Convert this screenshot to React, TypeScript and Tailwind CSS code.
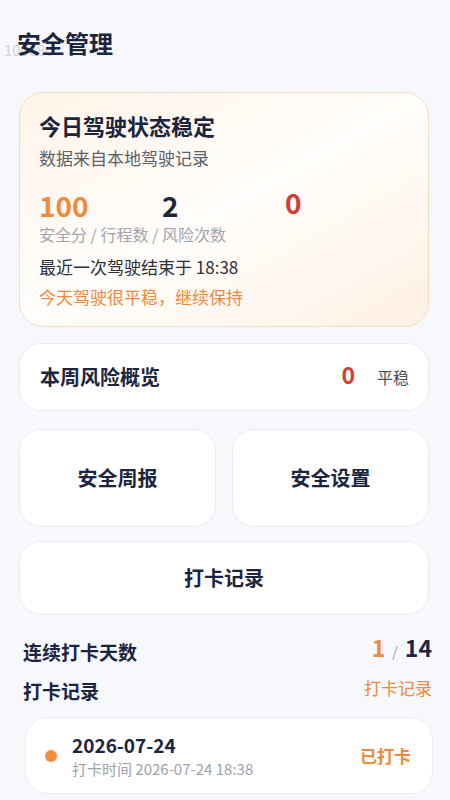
import React from 'react'

const font = { fontFamily: '"Noto Sans CJK SC", "Noto Sans", sans-serif' }

function StatCard() {
  return (
    <div className="rounded-[24px] border border-[#f8dcc2] bg-gradient-to-br from-[#fff4e8] via-[#fffdfb] to-[#fff1e4] px-[19px] pt-[17px] pb-[17px]">
      <p className="text-[22px] font-bold leading-[30px] text-[#1b2540]">今日驾驶状态稳定</p>
      <p className="mt-[6px] text-[17px] leading-[24px] text-[#5a5f6a]">数据来自本地驾驶记录</p>
      <div className="mt-[19px] flex h-[32px] items-center">
        <span className="w-[123px] text-[28px] font-bold leading-[30px] text-[#f0893a]">100</span>
        <span className="w-[123px] text-[28px] font-bold leading-[30px] text-[#1b2540]">2</span>
        <span className="-translate-y-[3px] text-[28px] font-bold leading-[30px] text-[#d63a3a]">0</span>
      </div>
      <p className="mt-[2px] text-[16px] leading-[22px] text-[#a1a5ae]">安全分 / 行程数 / 风险次数</p>
      <p className="mt-[10px] text-[17px] leading-[24px] text-[#2a2f3a]">最近一次驾驶结束于 18:38</p>
      <p className="mt-[6px] text-[17px] leading-[24px] text-[#f0893a]">今天驾驶很平稳，继续保持</p>
    </div>
  )
}

function ActionCard({ label, className }: { label: string; className?: string }) {
  return (
    <div
      className={`flex items-center justify-center rounded-[22px] border border-[#e9edf3] bg-white text-[20px] font-bold text-[#1b2540] ${className ?? ''}`}
    >
      {label}
    </div>
  )
}

export default function App() {
  return (
    <div style={font} className="relative min-h-[800px] w-[450px] overflow-hidden bg-[#f6f8fc] pl-[19px] pr-[21px] pt-[28px]">
      <span className="absolute left-[4px] top-[39px] text-[15px] text-[#d0d3d9]">100c8c</span>
      <h1 className="relative -ml-[2px] text-[24px] font-bold leading-[30px] text-[#1b2540]">安全管理</h1>

      <div className="mt-[34px]">
        <StatCard />
      </div>

      <div className="mt-[16px] flex h-[68px] items-center rounded-[22px] border border-[#e9edf3] bg-white pl-[20px] pr-[19px]">
        <span className="flex-1 text-[20px] font-bold text-[#1b2540]">本周风险概览</span>
        <span className="-translate-y-[3px] text-[23px] font-bold text-[#d63a3a]">0</span>
        <span className="ml-[22px] text-[16px] text-[#4a4f5a]">平稳</span>
      </div>

      <div className="mt-[18px] grid grid-cols-2 gap-[16px]">
        <ActionCard label="安全周报" className="h-[98px]" />
        <ActionCard label="安全设置" className="h-[98px]" />
      </div>

      <ActionCard label="打卡记录" className="mt-[14px] h-[74px]" />

      <div className="mt-[22px] flex h-[30px] items-center justify-between pl-[4px]">
        <span className="text-[19px] font-bold leading-[30px] text-[#1b2540]">连续打卡天数</span>
        <span className="-mr-[3px] flex -translate-y-[5px] items-baseline gap-[7px] font-bold">
          <span className="text-[23px] text-[#f0893a]">1</span>
          <span className="text-[14px] font-normal text-[#9aa0aa]">/</span>
          <span className="text-[23px] text-[#1b2540]">14</span>
        </span>
      </div>

      <div className="mt-[9px] flex h-[30px] items-center justify-between pl-[4px]">
        <span className="text-[19px] font-bold leading-[30px] text-[#1b2540]">打卡记录</span>
        <span className="-mr-[3px] -translate-y-[3px] text-[17px] text-[#f0893a]">打卡记录</span>
      </div>

      <div className="-mr-[4px] mt-[11px] ml-[6px] flex h-[77px] items-center rounded-[22px] border border-[#e9edf3] bg-white pl-[19px] pr-[21px]">
        <span className="h-[12px] w-[12px] shrink-0 rounded-full bg-[#f78c3c]" />
        <div className="ml-[15px] flex-1">
          <p className="text-[19px] font-bold leading-[26px] text-[#1b2540]">2026-07-24</p>
          <p className="mt-[1px] text-[15px] leading-[20px] text-[#9ea2ab]">打卡时间 2026-07-24 18:38</p>
        </div>
        <span className="text-[17px] font-bold text-[#f0893a]">已打卡</span>
      </div>
    </div>
  )
}
